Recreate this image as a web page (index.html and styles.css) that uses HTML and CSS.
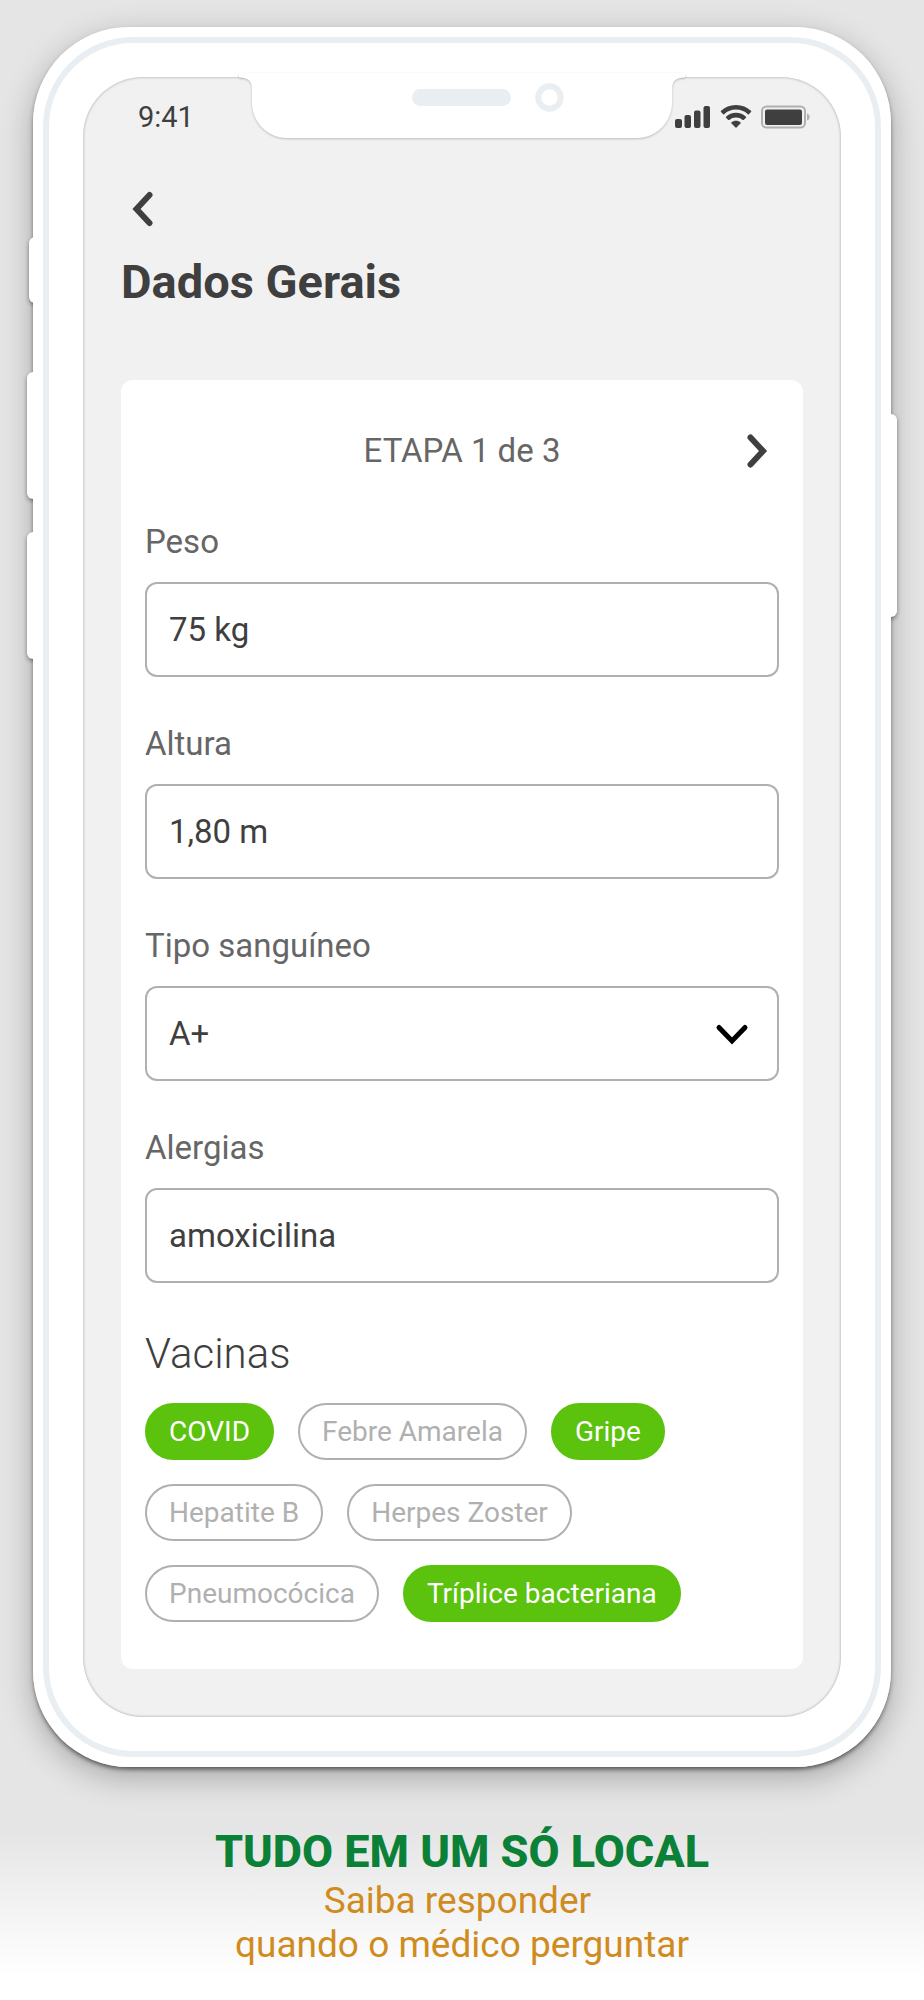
FILE: index.html
```html
<!DOCTYPE html>
<html lang="pt-BR">
<head>
<meta charset="utf-8">
<meta name="viewport" content="width=device-width, initial-scale=1">
<title>Dados Gerais</title>
<link rel="stylesheet" href="styles.css">
</head>
<body>
<main class="phone">
  <span class="side-key side-key-mute"></span>
  <span class="side-key side-key-up"></span>
  <span class="side-key side-key-down"></span>
  <span class="side-key side-key-power"></span>
  <div class="bezel">
    <div class="screen">
      <svg class="notch" width="446" height="64" viewBox="0 0 446 64" aria-hidden="true">
        <path class="notch-body" d="M0 -4V0.500C9 0.500 13 4 13 12V26C13 45 29 61 48 61H398C417 61 433 45 433 26V12C433 4 437 0.500 446 0.500V-4Z"/>
        <rect class="notch-detail" x="173" y="12" width="99" height="17" rx="8.5"/>
        <circle class="notch-camera" cx="310.500" cy="20.500" r="11.200"/>
      </svg>
      <div class="status-bar">
        <time class="clock">9:41</time>
        <div class="status-icons">
          <svg width="36" height="24" viewBox="0 0 36 24" aria-label="Sinal">
            <rect x="0" y="14" width="7" height="9" rx="2"/>
            <rect x="9.500" y="10" width="6.500" height="13" rx="2"/>
            <rect x="19" y="5.500" width="6.500" height="17.500" rx="2"/>
            <rect x="28.500" y="1" width="6.500" height="22" rx="2"/>
          </svg>
          <svg width="32" height="24" viewBox="0 0 32 24" aria-label="Wi-Fi">
            <path d="M16 0C22 0 27.200 2.200 31.200 6Q31.500 6.500 31 7L28.800 9.200Q28.300 9.600 27.800 9.200C24.500 6.200 20.500 4.600 16 4.600S7.500 6.200 4.200 9.200Q3.700 9.600 3.200 9.200L1 7Q.5 6.500 .8 6C4.800 2.200 10 0 16 0Z"/>
            <path d="M16 7.800C20 7.800 23.300 9.200 26 11.700Q26.400 12.200 26 12.700L23.700 14.900Q23.200 15.300 22.700 14.900C20.800 13.200 18.600 12.400 16 12.400S11.200 13.200 9.300 14.900Q8.800 15.300 8.300 14.900L6 12.700Q5.600 12.200 6 11.700C8.700 9.200 12 7.800 16 7.800Z"/>
            <path d="M16 15.700C17.800 15.700 19.400 16.300 20.700 17.400Q21.100 17.900 20.700 18.300L16.500 22.500Q16 23 15.500 22.500L11.300 18.300Q10.900 17.900 11.300 17.400C12.600 16.300 14.200 15.700 16 15.700Z"/>
          </svg>
          <svg width="49" height="24" viewBox="0 0 49 24" aria-label="Bateria">
            <rect class="battery-case" x="1" y="1.500" width="43" height="21" rx="4.500"/>
            <rect x="4" y="4.500" width="37" height="15.500" rx="2"/>
            <path class="battery-tip" d="M46 8.500C49.500 9.500 49.500 14.500 46 15.500Z"/>
          </svg>
        </div>
      </div>
      <header class="page-head">
        <button class="icon-button" type="button" aria-label="Voltar">
          <svg class="chevron" width="22" height="36" viewBox="0 0 22 36"><path d="M17.500 4L4.500 18L17.500 32"/></svg>
        </button>
        <h1 class="page-title">Dados Gerais</h1>
      </header>
      <form class="card">
        <div class="step">
          <p class="step-label">ETAPA 1 de 3</p>
          <button class="icon-button" type="button" aria-label="Próxima etapa">
            <svg class="chevron" width="22" height="36" viewBox="0 0 22 36"><path d="M4.500 4.500L17 18L4.500 31.500"/></svg>
          </button>
        </div>
        <div class="fields">
          <div class="field">
            <label for="peso">Peso</label>
            <input class="control" id="peso" type="text" value="75 kg">
          </div>
          <div class="field">
            <label for="altura">Altura</label>
            <input class="control" id="altura" type="text" value="1,80 m">
          </div>
          <div class="field">
            <label for="tipo">Tipo sanguíneo</label>
            <div class="select-box">
              <select class="control" id="tipo"><option>A+</option></select>
              <svg class="select-arrow" width="34" height="24" viewBox="0 0 34 24" aria-hidden="true"><path d="M4 4.500L17 18L30 4.500"/></svg>
            </div>
          </div>
          <div class="field">
            <label for="alergias">Alergias</label>
            <input class="control" id="alergias" type="text" value="amoxicilina">
          </div>
        </div>
        <section class="vaccines">
          <h2 class="section-title">Vacinas</h2>
          <div class="chips">
            <button class="chip chip-on" type="button" aria-pressed="true">COVID</button>
            <button class="chip" type="button" aria-pressed="false">Febre Amarela</button>
            <button class="chip chip-on" type="button" aria-pressed="true">Gripe</button>
            <button class="chip" type="button" aria-pressed="false">Hepatite B</button>
            <button class="chip" type="button" aria-pressed="false">Herpes Zoster</button>
            <button class="chip" type="button" aria-pressed="false">Pneumocócica</button>
            <button class="chip chip-on" type="button" aria-pressed="true">Tríplice bacteriana</button>
          </div>
        </section>
      </form>
    </div>
  </div>
</main>
<footer class="caption">
  <h2 class="caption-title">TUDO EM UM SÓ LOCAL</h2>
  <p class="caption-text">Saiba responder&nbsp;<br>quando o médico perguntar</p>
</footer>
</body>
</html>
```
FILE: styles.css
```css
:root {
  --ink: #3f3f3f;
  --muted: #666;
  --line: #b0b0b0;
  --green: #5bc20e;
  --frame: #e8eef1;
}

* {
  box-sizing: border-box;
}

body {
  margin: 0;
  min-height: 100vh;
  padding: 27px 33px 0;
  font-family: Roboto, "Liberation Sans", sans-serif;
  color: var(--ink);
  background: linear-gradient(to bottom, #e5e5e5 calc(100% - 170px), #fff calc(100% - 24px));
}

h1, h2, p {
  margin: 0;
}

button, input, select {
  font: inherit;
  color: inherit;
}

/* Device frame */
.phone {
  position: relative;
  padding: 10px;
  border-radius: 96px;
  background: #fff;
}

/* The shadow sits in its own layer, below the side keys */
.phone::before {
  content: "";
  position: absolute;
  inset: 0;
  z-index: -2;
  border-radius: 96px;
  box-shadow: 0 3px 5px -1px rgba(0, 0, 0, .6), 0 10px 32px rgba(0, 0, 0, .28);
}

.side-key {
  position: absolute;
  z-index: -1;
  width: 16px;
  border-radius: 6px;
  background: #fff;
  box-shadow: 0 2px 4px rgba(0, 0, 0, .4);
}

.side-key-mute {
  top: 210px;
  left: -4px;
  height: 66px;
}

.side-key-up {
  top: 345px;
  left: -6px;
  height: 127px;
}

.side-key-down {
  top: 505px;
  left: -6px;
  height: 127px;
}

.side-key-power {
  top: 387px;
  right: -6px;
  height: 203px;
}

.bezel {
  padding: 34px;
  border: 6px solid var(--frame);
  border-radius: 90px;
}

.screen {
  position: relative;
  padding: 0 38px 48px;
  border-radius: 60px;
  background: #f1f1f1;
  box-shadow: inset 0 0 3px rgba(0, 0, 0, .35);
}

.notch {
  position: absolute;
  top: 0;
  left: 50%;
  transform: translateX(-50%);
  overflow: visible;
}

.notch-body {
  fill: #fff;
  filter: drop-shadow(0 1px 1px rgba(0, 0, 0, .22));
}

.notch-detail {
  fill: var(--frame);
}

.notch-camera {
  fill: #fff;
  stroke: var(--frame);
  stroke-width: 6px;
}

.status-bar {
  display: flex;
  justify-content: space-between;
  align-items: center;
  height: 80px;
  margin-right: -7px;
  padding-left: 17px;
}

.clock {
  font-size: 29px;
  line-height: 36px;
}

.status-icons {
  position: relative;
  display: flex;
  gap: 9px;
  fill: var(--ink);
}

.battery-case {
  fill: none;
  stroke: var(--line);
  stroke-width: 2px;
}

.battery-tip {
  fill: var(--line);
}

/* Page heading */
.page-head {
  display: flex;
  flex-direction: column;
  align-items: flex-start;
  gap: 25px;
  padding: 34px 0 68px;
}

.icon-button {
  display: flex;
  padding: 0 11px;
  border: 0;
  background: none;
}

.chevron {
  fill: none;
  stroke: var(--ink);
  stroke-width: 6px;
  stroke-linecap: round;
  stroke-linejoin: miter;
}

.page-title {
  font-size: 47px;
  line-height: 60px;
  font-weight: 700;
}

/* Form card */
.card {
  padding: 24px 24px 47px;
  border-radius: 12px;
  background: #fff;
}

.step {
  display: grid;
  grid-template-columns: 1fr auto 1fr;
  align-items: center;
  min-height: 94px;
  margin-bottom: 25px;
  color: var(--muted);
}

.step-label {
  grid-column: 2;
  font-size: 33px;
  line-height: 38px;
}

.step .icon-button {
  justify-self: end;
}

.fields {
  display: grid;
  gap: 48px;
}

.field {
  display: grid;
  gap: 21px;
  font-size: 33px;
  line-height: 38px;
}

.field label {
  color: var(--muted);
}

.control {
  display: block;
  width: 100%;
  height: 95px;
  padding: 0 22px;
  border: 2px solid var(--line);
  border-radius: 12px;
  background: #fff;
  appearance: none;
}

.select-box {
  position: relative;
}

.select-arrow {
  position: absolute;
  top: 37px;
  right: 30px;
  pointer-events: none;
  fill: none;
  stroke: #000;
  stroke-width: 5px;
  stroke-linecap: round;
}

.vaccines {
  display: grid;
  gap: 25px;
  margin-top: 47px;
}

.section-title {
  font-size: 42px;
  line-height: 48px;
  font-weight: 300;
}

.chips {
  display: flex;
  flex-wrap: wrap;
  gap: 24px;
}

.chip {
  height: 57px;
  padding: 0 22px;
  border: 2px solid var(--line);
  border-radius: 29px;
  background: #fff;
  color: var(--line);
  font-size: 28px;
}

.chip-on {
  border-color: var(--green);
  background: var(--green);
  color: #fff;
}

/* Caption under the device */
.caption {
  padding: 58px 0 24px;
  text-align: center;
}

.caption-title {
  color: #0b8037;
  font-size: 45px;
  line-height: 54px;
  font-weight: 800;
}

.caption-text {
  color: #d08b20;
  font-size: 37px;
  line-height: 44px;
}
```
